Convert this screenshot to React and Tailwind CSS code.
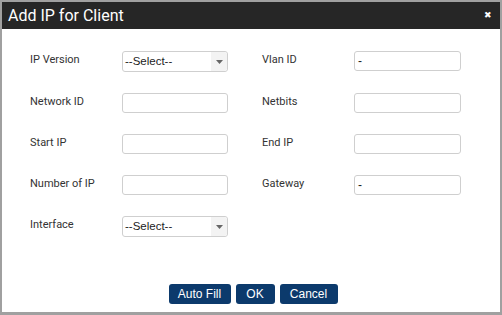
import React from "react";

function Select() {
  return (
    <div className="relative flex h-[21px] w-[106px] items-center rounded-[3px] border border-[#cfcfcf] bg-white">
      <span className="pl-[2px] text-[11.5px] text-[#222]" style={{ fontFamily: '"Liberation Sans", Arial, sans-serif' }}>--Select--</span>
      <div className="absolute right-0 top-0 flex h-full w-[16px] items-center justify-center rounded-r-[3px] bg-[#f3f3f3]">
        <svg width="7" height="4" viewBox="0 0 7 4"><path d="M0 0h7L3.5 4z" fill="#666" /></svg>
      </div>
    </div>
  );
}

function Input({ value = "", w = "w-[106px]" }) {
  return (
    <div className={"flex h-[20px] items-center rounded-[3px] border border-[#cfcfcf] bg-white " + w}>
      <span className="pl-[3px] text-[12px] text-[#222]" style={{ fontFamily: '"Liberation Sans", Arial, sans-serif' }}>{value}</span>
    </div>
  );
}

function Field({ label, children }) {
  return (
    <div className="flex items-start">
      <div className="w-[92px] pt-[2px] text-[11px] leading-[13px] text-[#333]">{label}</div>
      {children}
    </div>
  );
}

export default function App() {
  return (
    <div className="h-[315px] w-[502px] bg-white" style={{ fontFamily: 'Roboto, "Open Sans", sans-serif' }}>
      <div className="flex h-full w-full flex-col border-2 border-b-[3px] border-[#a0a0a0]">
        <div className="flex h-[27px] items-center justify-between bg-[#262626] pl-[6px] pr-[8px]">
          <span className="text-[16px] text-white">Add IP for Client</span>
          <span className="text-[9px] leading-none text-white">✖</span>
        </div>
        <div className="flex flex-col gap-[21px] pl-[28px] pt-[22px]">
          <div className="flex gap-[34px]">
            <Field label="IP Version"><Select /></Field>
            <Field label="Vlan ID"><Input value="-" w="w-[107px]" /></Field>
          </div>
          <div className="flex gap-[34px]">
            <Field label="Network ID"><Input /></Field>
            <Field label="Netbits"><Input w="w-[107px]" /></Field>
          </div>
          <div className="flex gap-[34px]">
            <Field label="Start IP"><Input /></Field>
            <Field label="End IP"><Input w="w-[107px]" /></Field>
          </div>
          <div className="flex gap-[34px]">
            <Field label="Number of IP"><Input /></Field>
            <Field label="Gateway"><Input value="-" w="w-[107px]" /></Field>
          </div>
          <div className="flex gap-[34px]">
            <Field label="Interface"><Select /></Field>
          </div>
        </div>
        <div className="mt-auto mb-[8px] flex justify-center gap-[5px] pl-[4px]" style={{ fontFamily: '"Liberation Sans", Arial, sans-serif' }}>
          <button className="h-[20px] w-[62px] rounded-[3px] bg-[#0c3a6c] text-[12px] text-white">Auto Fill</button>
          <button className="h-[20px] w-[39px] rounded-[3px] bg-[#0c3a6c] text-[12px] text-white">OK</button>
          <button className="h-[20px] w-[58px] rounded-[3px] bg-[#0c3a6c] text-[12px] text-white">Cancel</button>
        </div>
      </div>
    </div>
  );
}
